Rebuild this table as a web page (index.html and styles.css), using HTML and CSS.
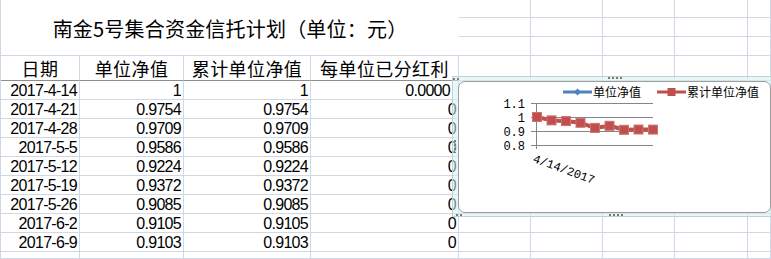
FILE: index.html
```html
<!DOCTYPE html>
<html lang="zh">
<head>
<meta charset="utf-8">
<title>南金5号集合资金信托计划</title>
<link rel="stylesheet" href="styles.css">
</head>
<body>
<div class="sheet">
  <div class="cell title">南金5号集合资金信托计划（单位：元）</div>
  <div class="cell"></div><div class="cell"></div><div class="cell"></div><div class="cell"></div><div class="cell"></div>
  <div class="cell"></div><div class="cell"></div><div class="cell"></div><div class="cell"></div><div class="cell"></div>
  <div class="cell"></div><div class="cell"></div><div class="cell"></div><div class="cell"></div><div class="cell"></div>

  <div class="cell head">日期</div><div class="cell head">单位净值</div><div class="cell head">累计单位净值</div><div class="cell head">每单位已分红利</div>
  <div class="cell"></div><div class="cell"></div><div class="cell"></div><div class="cell"></div><div class="cell"></div>

  <div class="cell num">2017-4-14</div><div class="cell num">1</div><div class="cell num">1</div><div class="cell num wide">0.0000</div>
  <div class="cell"></div><div class="cell"></div><div class="cell"></div><div class="cell"></div><div class="cell"></div>

  <div class="cell num">2017-4-21</div><div class="cell num">0.9754</div><div class="cell num">0.9754</div><div class="cell num">0</div>
  <div class="cell"></div><div class="cell"></div><div class="cell"></div><div class="cell"></div><div class="cell"></div>

  <div class="cell num">2017-4-28</div><div class="cell num">0.9709</div><div class="cell num">0.9709</div><div class="cell num">0</div>
  <div class="cell"></div><div class="cell"></div><div class="cell"></div><div class="cell"></div><div class="cell"></div>

  <div class="cell num">2017-5-5</div><div class="cell num">0.9586</div><div class="cell num">0.9586</div><div class="cell num">0</div>
  <div class="cell"></div><div class="cell"></div><div class="cell"></div><div class="cell"></div><div class="cell"></div>

  <div class="cell num">2017-5-12</div><div class="cell num">0.9224</div><div class="cell num">0.9224</div><div class="cell num">0</div>
  <div class="cell"></div><div class="cell"></div><div class="cell"></div><div class="cell"></div><div class="cell"></div>

  <div class="cell num">2017-5-19</div><div class="cell num">0.9372</div><div class="cell num">0.9372</div><div class="cell num">0</div>
  <div class="cell"></div><div class="cell"></div><div class="cell"></div><div class="cell"></div><div class="cell"></div>

  <div class="cell num">2017-5-26</div><div class="cell num">0.9085</div><div class="cell num">0.9085</div><div class="cell num">0</div>
  <div class="cell"></div><div class="cell"></div><div class="cell"></div><div class="cell"></div><div class="cell"></div>

  <div class="cell num">2017-6-2</div><div class="cell num">0.9105</div><div class="cell num">0.9105</div><div class="cell num">0</div>
  <div class="cell"></div><div class="cell"></div><div class="cell"></div><div class="cell"></div><div class="cell"></div>

  <div class="cell num">2017-6-9</div><div class="cell num">0.9103</div><div class="cell num">0.9103</div><div class="cell num">0</div>
  <div class="cell"></div><div class="cell"></div><div class="cell"></div><div class="cell"></div><div class="cell"></div>

  <div class="cell"></div><div class="cell"></div><div class="cell"></div><div class="cell"></div>
  <div class="cell"></div><div class="cell"></div><div class="cell"></div><div class="cell"></div><div class="cell"></div>
</div>

<div class="chart">
  <span class="handle handle-top"></span>
  <span class="handle handle-bottom"></span>
  <span class="handle handle-left"></span>
  <span class="handle handle-tl"></span>
  <span class="handle handle-bl"></span>
  <div class="chart-inner">
    <svg class="plot" width="311" height="130" viewBox="0 0 311 130" xmlns="http://www.w3.org/2000/svg">
      <!-- legend -->
      <line x1="104" y1="10" x2="133" y2="10" stroke="#4f81bd" stroke-width="3"/>
      <path d="M118.5 6.5 L122 10 L118.5 13.5 L115 10 Z" fill="#4f81bd"/>
      <text class="legend" x="134" y="14.5">单位净值</text>
      <line x1="198" y1="10" x2="227" y2="10" stroke="#c0504d" stroke-width="3"/>
      <rect x="208.5" y="6" width="8" height="8" fill="#c0504d"/>
      <text class="legend" x="228" y="14.5">累计单位净值</text>

      <!-- gridlines -->
      <g stroke="#868686" stroke-width="1">
        <line x1="72" y1="21.5" x2="194" y2="21.5"/>
        <line x1="72" y1="35.5" x2="194" y2="35.5"/>
        <line x1="72" y1="49.5" x2="194" y2="49.5"/>
        <line x1="72" y1="63.5" x2="194" y2="63.5"/>
        <line x1="77.5" y1="21" x2="77.5" y2="67"/>
      </g>

      <!-- axis labels -->
      <text class="axis" x="66" y="25.5" text-anchor="end">1.1</text>
      <text class="axis" x="66" y="39.5" text-anchor="end">1</text>
      <text class="axis" x="66" y="53.5" text-anchor="end">0.9</text>
      <text class="axis" x="66" y="67.5" text-anchor="end">0.8</text>
      <text class="axis" x="105" y="91" text-anchor="middle" transform="rotate(20 105 87)">4/14/2017</text>

      <!-- series 1 (hidden behind series 2) -->
      <polyline fill="none" stroke="#4f81bd" stroke-width="3"
        points="78,35 92.5,38.4 107,39.1 121.5,40.8 136,45.9 150.5,43.8 165,47.8 179.5,47.5 194,47.6"/>
      <!-- series 2 -->
      <polyline fill="none" stroke="#c0504d" stroke-width="4" stroke-linejoin="round"
        points="78,35 92.5,38.4 107,39.1 121.5,40.8 136,45.9 150.5,43.8 165,47.8 179.5,47.5 194,47.6"/>
      <g fill="#c0504d" stroke="#cf7370" stroke-width="1">
        <rect x="73.5" y="30.5" width="9" height="9"/>
        <rect x="88" y="33.9" width="9" height="9"/>
        <rect x="102.5" y="34.6" width="9" height="9"/>
        <rect x="117" y="36.3" width="9" height="9"/>
        <rect x="131.5" y="41.4" width="9" height="9"/>
        <rect x="146" y="39.3" width="9" height="9"/>
        <rect x="160.5" y="43.3" width="9" height="9"/>
        <rect x="175" y="43" width="9" height="9"/>
        <rect x="189.5" y="43.1" width="9" height="9"/>
      </g>
    </svg>
  </div>
</div>
</body>
</html>
```

FILE: styles.css
```css
html, body {
  margin: 0;
  padding: 0;
  overflow: hidden;
  background: #ffffff;
}

body {
  width: 771px;
  height: 259px;
  position: relative;
  font-family: "Liberation Sans", "Noto Sans CJK SC", sans-serif;
  color: #000;
}

.sheet {
  display: grid;
  grid-template-columns: 79px 104px 127px 148px 72px 72px 72px 73px 23px;
  grid-template-rows: 18px 19px 19px 25px repeat(9, 19px) 7px;
  border-left: 1px solid #d0d7e5;
  width: 770px;
  height: 259px;
  overflow: hidden;
}

.cell {
  box-sizing: border-box;
  border-right: 1px solid #d0d7e5;
  border-bottom: 1px solid #d0d7e5;
  white-space: nowrap;
  min-width: 0;
}

.title {
  grid-column: 1 / 5;
  grid-row: 1 / 4;
  display: flex;
  align-items: center;
  justify-content: center;
  padding-top: 2px;
  font-family: "Noto Sans CJK SC", sans-serif;
  font-size: 20px;
  line-height: 24px;
  letter-spacing: 0.2px;
  border-right: none;
}

.head {
  display: flex;
  align-items: flex-end;
  justify-content: center;
  font-family: "Noto Sans CJK SC", sans-serif;
  font-size: 18px;
  line-height: 24px;
  letter-spacing: 0.4px;
  border-bottom-color: #8e8e8e;
}

.num {
  text-align: right;
  padding-right: 2px;
  font-family: "Liberation Sans", sans-serif;
  font-size: 16px;
  line-height: 20px;
  letter-spacing: -0.7px;
}

.num.wide {
  padding-right: 8px;
}

/* chart overlay */
.chart {
  position: absolute;
  left: 452px;
  top: 76px;
  width: 319px;
  height: 141px;
  box-sizing: border-box;
  border: 1px solid #c6cfcf;
  border-right: none;
  background: rgba(214, 242, 242, 0.55);
  padding: 4px 0 3px 5px;
}

.chart-inner {
  position: relative;
  box-sizing: border-box;
  width: 313px;
  height: 132px;
  background: #ffffff;
  border: 1px solid #9c9c9c;
  border-radius: 7px;
  overflow: hidden;
}

.plot {
  position: absolute;
  left: 0;
  top: 0;
}

.legend {
  font-family: "Noto Sans CJK SC", sans-serif;
  font-size: 12px;
  fill: #000;
}

.axis {
  font-family: "Liberation Mono", monospace;
  font-size: 12px;
  fill: #000;
}

.handle {
  position: absolute;
  width: 15px;
  height: 2px;
  background: repeating-linear-gradient(90deg, #7a7a7a 0 2px, transparent 2px 4px);
}

.handle-top {
  left: 155px;
  top: 0;
}

.handle-bottom {
  left: 156px;
  bottom: 0;
}

.handle-left {
  left: 1px;
  top: 63px;
  width: 2px;
  height: 13px;
  background: repeating-linear-gradient(180deg, #7a7a7a 0 2px, transparent 2px 4px);
}

.handle-tl {
  left: 0;
  top: 1px;
  width: 6px;
  height: 2px;
}

.handle-bl {
  left: 3px;
  bottom: 0;
  width: 8px;
  height: 2px;
}
```
